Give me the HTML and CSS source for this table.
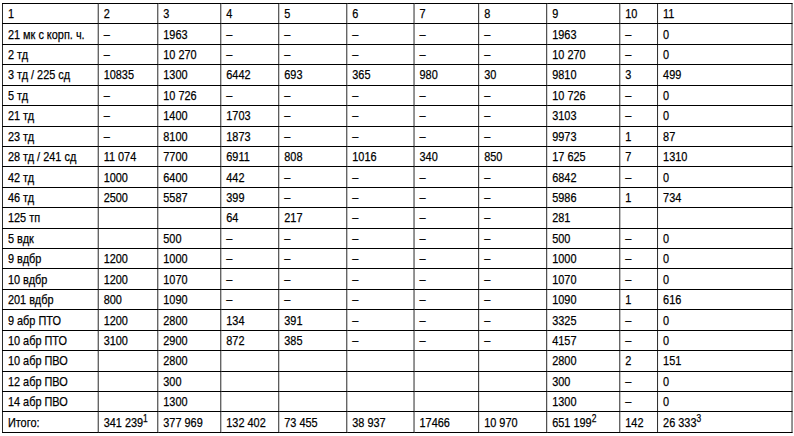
FILE: index.html
```html
<!DOCTYPE html>
<html lang="ru">
<head>
<meta charset="utf-8">
<link rel="stylesheet" href="styles.css">
</head>
<body>
<div class="frame">
<table class="grid">
<colgroup>
<col class="c1"><col class="c2"><col class="c3"><col class="c4"><col class="c5"><col class="c6"><col class="c7"><col class="c8"><col class="c9"><col class="c10"><col class="c11">
</colgroup>
<tbody>
<tr><td>1</td><td>2</td><td>3</td><td>4</td><td>5</td><td>6</td><td>7</td><td>8</td><td>9</td><td>10</td><td>11</td></tr>
<tr><td>21 мк с корп. ч.</td><td>–</td><td>1963</td><td>–</td><td>–</td><td>–</td><td>–</td><td>–</td><td>1963</td><td>–</td><td>0</td></tr>
<tr><td>2 тд</td><td>–</td><td>10 270</td><td>–</td><td>–</td><td>–</td><td>–</td><td>–</td><td>10 270</td><td>–</td><td>0</td></tr>
<tr><td>3 тд / 225 сд</td><td>10835</td><td>1300</td><td>6442</td><td>693</td><td>365</td><td>980</td><td>30</td><td>9810</td><td>3</td><td>499</td></tr>
<tr><td>5 тд</td><td>–</td><td>10 726</td><td>–</td><td>–</td><td>–</td><td>–</td><td>–</td><td>10 726</td><td>–</td><td>0</td></tr>
<tr><td>21 тд</td><td>–</td><td>1400</td><td>1703</td><td>–</td><td>–</td><td>–</td><td>–</td><td>3103</td><td>–</td><td>0</td></tr>
<tr><td>23 тд</td><td>–</td><td>8100</td><td>1873</td><td>–</td><td>–</td><td>–</td><td>–</td><td>9973</td><td>1</td><td>87</td></tr>
<tr><td>28 тд / 241 сд</td><td>11 074</td><td>7700</td><td>6911</td><td>808</td><td>1016</td><td>340</td><td>850</td><td>17 625</td><td>7</td><td>1310</td></tr>
<tr><td>42 тд</td><td>1000</td><td>6400</td><td>442</td><td>–</td><td>–</td><td>–</td><td>–</td><td>6842</td><td>–</td><td>0</td></tr>
<tr><td>46 тд</td><td>2500</td><td>5587</td><td>399</td><td>–</td><td>–</td><td>–</td><td>–</td><td>5986</td><td>1</td><td>734</td></tr>
<tr><td>125 тп</td><td></td><td></td><td>64</td><td>217</td><td>–</td><td>–</td><td>–</td><td>281</td><td></td><td></td></tr>
<tr><td>5 вдк</td><td></td><td>500</td><td>–</td><td>–</td><td>–</td><td>–</td><td>–</td><td>500</td><td>–</td><td>0</td></tr>
<tr><td>9 вдбр</td><td>1200</td><td>1000</td><td>–</td><td>–</td><td>–</td><td>–</td><td>–</td><td>1000</td><td>–</td><td>0</td></tr>
<tr><td>10 вдбр</td><td>1200</td><td>1070</td><td>–</td><td>–</td><td>–</td><td>–</td><td>–</td><td>1070</td><td>–</td><td>0</td></tr>
<tr><td>201 вдбр</td><td>800</td><td>1090</td><td>–</td><td>–</td><td>–</td><td>–</td><td>–</td><td>1090</td><td>1</td><td>616</td></tr>
<tr><td>9 абр ПТО</td><td>1200</td><td>2800</td><td>134</td><td>391</td><td>–</td><td>–</td><td>–</td><td>3325</td><td>–</td><td>0</td></tr>
<tr><td>10 абр ПТО</td><td>3100</td><td>2900</td><td>872</td><td>385</td><td>–</td><td>–</td><td>–</td><td>4157</td><td>–</td><td>0</td></tr>
<tr><td>10 абр ПВО</td><td></td><td>2800</td><td></td><td></td><td></td><td></td><td></td><td>2800</td><td>2</td><td>151</td></tr>
<tr><td>12 абр ПВО</td><td></td><td>300</td><td></td><td></td><td></td><td></td><td></td><td>300</td><td>–</td><td>0</td></tr>
<tr><td>14 абр ПВО</td><td></td><td>1300</td><td></td><td></td><td></td><td></td><td></td><td>1300</td><td>–</td><td>0</td></tr>
<tr><td>Итого:</td><td>341 239<sup>1</sup></td><td>377 969</td><td>132 402</td><td>73 455</td><td>38 937</td><td>17466</td><td>10 970</td><td>651 199<sup>2</sup></td><td>142</td><td>26 333<sup>3</sup></td></tr>
</tbody>
</table>
</div>
</body>
</html>
```

FILE: styles.css
```css
html, body {
  margin: 0;
  padding: 0;
  background: #fff;
  overflow: hidden;
}
body {
  padding: 3px 0 0 2px;
  font-family: "Liberation Sans", Arial, sans-serif;
  font-size: 13px;
  color: #000;
}
.frame {
  width: 792px;
  overflow: hidden;
}
.grid {
  border-collapse: collapse;
  table-layout: fixed;
  width: 941px;
  height: 430px;
  transform: scaleX(0.84);
  transform-origin: 0 0;
}
.grid td {
  border-top: 1px solid #000;
  border-bottom: 1px solid #000;
  border-left: 1.2px solid #000;
  border-right: 1.2px solid #000;
  padding: 1px 6px 0 6px;
  text-align: left;
  vertical-align: middle;
  white-space: nowrap;
  line-height: 14px;
  -webkit-text-stroke: 0.25px #000;
}
.grid sup {
  font-size: 10px;
  line-height: 0;
  vertical-align: 5px;
}
.c1 { width: 114px; }
.c2 { width: 71px; }
.c3 { width: 75px; }
.c4 { width: 69px; }
.c5 { width: 81px; }
.c6 { width: 80px; }
.c7 { width: 77px; }
.c8 { width: 81px; }
.c9 { width: 87px; }
.c10 { width: 45px; }
.c11 { width: 160px; }
```
